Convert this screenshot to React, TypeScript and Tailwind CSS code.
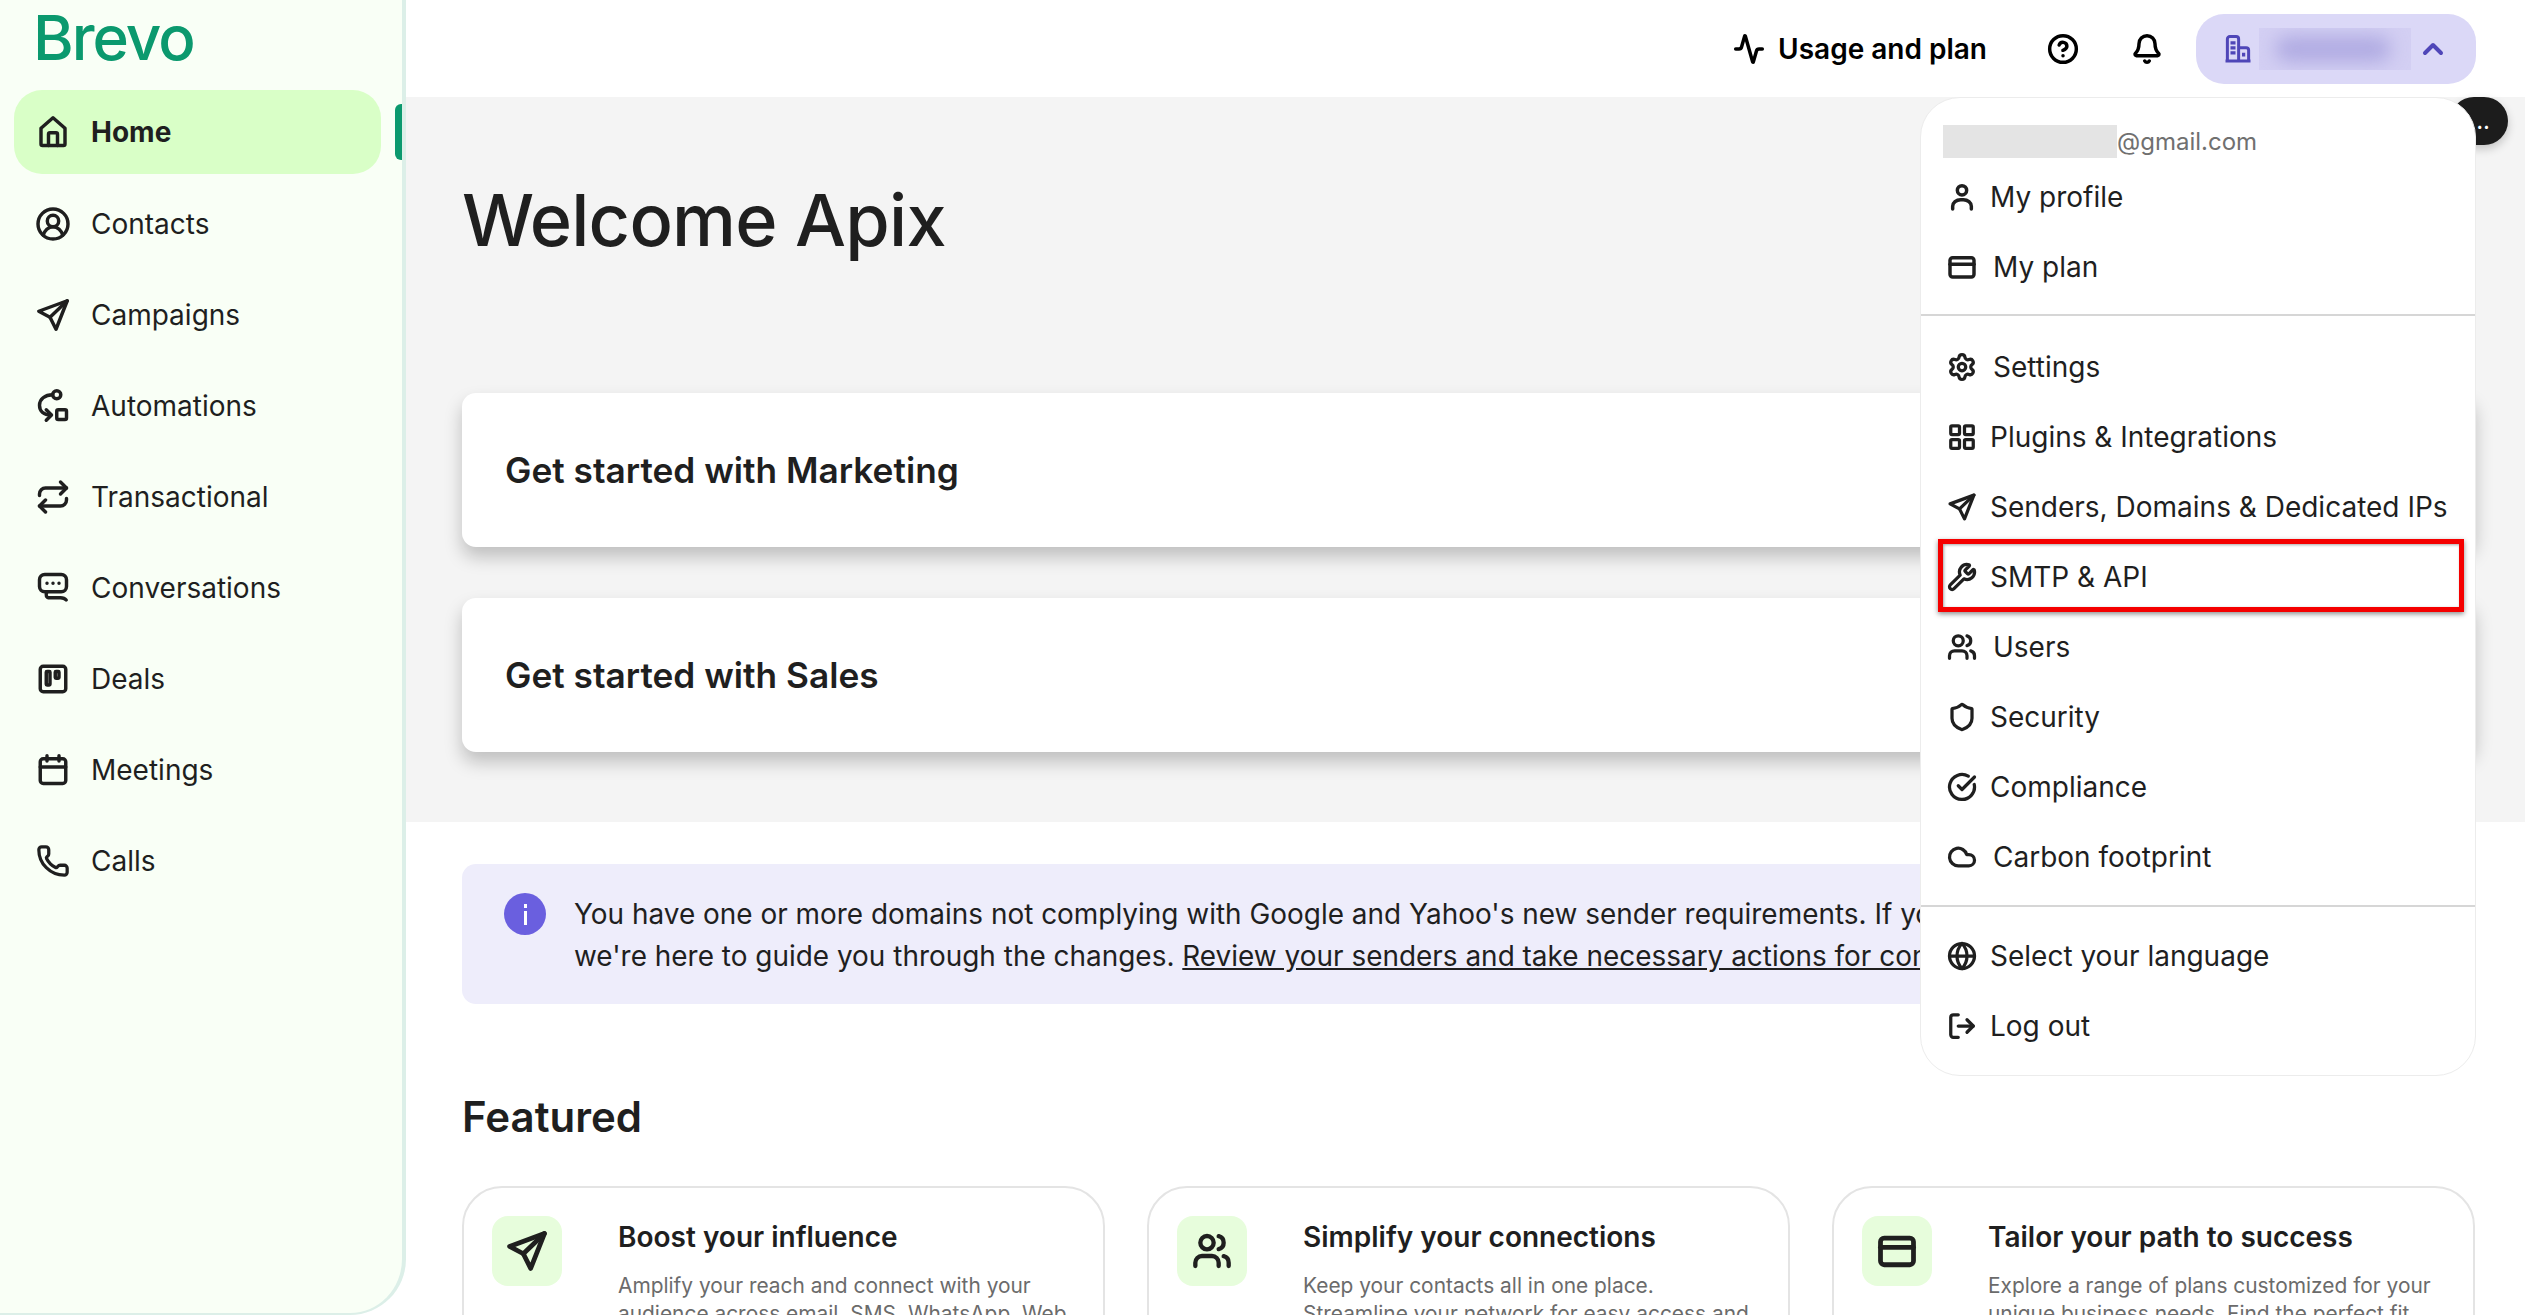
import { Activity, Bell, ChevronUp, CircleCheckBig, CircleHelp, Cloud, Globe, LayoutGrid, LogOut, Phone, Repeat, Settings, Shield, Users, Wrench } from "lucide-react";
import type { ReactNode } from "react";

function Svg({ size = 36, width = 2.3, children }: { size?: number; width?: number; children: ReactNode }) {
  return (
    <svg width={size} height={size} viewBox="0 0 24 24" fill="none" stroke="currentColor" strokeWidth={width} strokeLinecap="round" strokeLinejoin="round" className="shrink-0">
      {children}
    </svg>
  );
}

const HomeIcon = () => (
  <Svg>
    <path d="M12 2.500 4 9.500V20a1 1 0 0 0 1 1h14a1 1 0 0 0 1-1V9.500z" />
    <path d="M9 21v-7.500a1 1 0 0 1 1-1h4a1 1 0 0 1 1 1V21" />
  </Svg>
);
const ContactIcon = () => (
  <Svg>
    <circle cx="12" cy="12" r="10" />
    <circle cx="12" cy="10" r="3.800" />
    <path d="M5.500 19.500c.8-3 3.400-5.700 6.500-5.700s5.700 2.700 6.500 5.700" />
  </Svg>
);
const PlaneIcon = ({ size = 36, width = 2.3 }: { size?: number; width?: number }) => (
  <Svg size={size} width={width}>
    <path d="M21.500 2.500 2.500 9.500l7.500 4 4 8z" />
    <path d="M21.500 2.500 10 13.500" />
  </Svg>
);
const AutomationIcon = () => (
  <Svg>
    <circle cx="14.500" cy="4.500" r="2.700" />
    <rect x="14.500" y="14.500" width="6.500" height="6.500" rx="1" />
    <path d="M11.800 4.500C6.500 4.500 3 7.500 3 11.500c0 4 3 6.500 7.500 6.500" />
    <path d="m7.500 14.500 3.500 3.500-3.500 3.500" />
  </Svg>
);
const ChatIcon = () => (
  <Svg>
    <rect x="3" y="3" width="18" height="11.500" rx="3.500" />
    <path d="M8 14.500c-1.200 2.500-.5 4 2 4h7c1.600 0 3 .5 3.800 1.500" />
    <path d="M8 8.800h.01M12 8.800h.01M16 8.800h.01" />
  </Svg>
);
const DealIcon = () => (
  <Svg>
    <rect x="3.500" y="3.500" width="17" height="17" rx="2" />
    <rect x="7.500" y="7" width="2.500" height="9" rx=".5" />
    <rect x="13.500" y="7" width="2.500" height="4.500" rx=".5" />
  </Svg>
);
const CalendarIcon = () => (
  <Svg>
    <rect x="3.500" y="4.500" width="17" height="16.500" rx="2" />
    <path d="M3.500 10h17M8 2.500V6M16 2.500V6" />
  </Svg>
);
const PersonIcon = () => (
  <Svg size={32} width={2.6}>
    <circle cx="12" cy="7" r="3.500" />
    <path d="M5 21v-2a6 5 0 0 1 6-5h2a6 5 0 0 1 6 5v2" />
  </Svg>
);
const CardIcon = ({ size = 32 }: { size?: number }) => (
  <Svg size={size} width={2.6}>
    <rect x="3" y="5" width="18" height="14.500" rx="2" />
    <path d="M3 10h18" />
  </Svg>
);
const BuildingIcon = () => (
  <svg width="30" height="30" viewBox="0 0 24 24" fill="none" stroke="#4f46b8" strokeWidth="2.400" className="shrink-0">
    <path d="M3.500 21V4a2 2 0 0 1 2-2h5a2 2 0 0 1 2 2v17M12.500 11h6a2 2 0 0 1 2 2v8M2 21.500h20" />
    <path d="M6 7h4M6 11h4M6 15h4M16.500 15v3" strokeWidth="2.600" />
  </svg>
);

const nav = [
  { label: "Contacts", icon: <ContactIcon /> },
  { label: "Campaigns", icon: <PlaneIcon /> },
  { label: "Automations", icon: <AutomationIcon /> },
  { label: "Transactional", icon: <Repeat size={36} strokeWidth={2.3} className="shrink-0" /> },
  { label: "Conversations", icon: <ChatIcon /> },
  { label: "Deals", icon: <DealIcon /> },
  { label: "Meetings", icon: <CalendarIcon /> },
  { label: "Calls", icon: <Phone size={34} strokeWidth={2.3} className="shrink-0" /> },
];

const menuIconProps = { size: 30, strokeWidth: 2.6, className: "shrink-0" };

function MenuItem({ icon, label, wide = false }: { icon: ReactNode; label: string; wide?: boolean }) {
  return (
    <div className="flex h-[70px] items-center pl-[24px]">
      <div className="flex w-[34px] shrink-0 items-center justify-center text-[#1f1f1f]">{icon}</div>
      <span className={wide ? "ml-[14px] text-[28px] text-[#1f1f1f]" : "ml-[11px] text-[28px] text-[#1f1f1f]"}>{label}</span>
    </div>
  );
}

const features = [
  {
    title: "Boost your influence",
    text: "Amplify your reach and connect with your audience across email, SMS, WhatsApp, Web push and more.",
    icon: <PlaneIcon size={44} width={2.600} />,
  },
  {
    title: "Simplify your connections",
    text: "Keep your contacts all in one place. Streamline your network for easy access and better engagement.",
    icon: <Users size={40} strokeWidth={2.600} />,
  },
  {
    title: "Tailor your path to success",
    text: "Explore a range of plans customized for your unique business needs. Find the perfect fit for your team.",
    icon: <CardIcon size={44} />,
  },
];

export default function App() {
  return (
    <div className="relative flex h-[1315px] w-[2525px] overflow-hidden bg-white font-['Inter',sans-serif] text-[#1f1f1f]">
      <aside className="relative flex w-[406px] shrink-0 flex-col rounded-br-[56px] border-r-4 border-b-2 border-[#dcefe8] bg-[#f9fff6]">
        <div className="flex h-[90px] items-start pl-[33px]">
          <span className="text-[62px] leading-[76px] font-medium tracking-[-2px] text-[#0b996e]">Brevo</span>
        </div>
        <div className="mx-[14px] flex h-[84px] w-[367px] items-center gap-[20px] rounded-[28px] bg-[#d9ffc7] pl-[21px] text-[28px] font-bold">
          <HomeIcon />
          Home
        </div>
        <div className="absolute top-[104px] left-[395px] h-[56px] w-[7px] rounded-l-[6px] bg-[#0b996e]" />
        <nav className="flex flex-col pt-[4px]">
          {nav.map((item) => (
            <div key={item.label} className="flex h-[91px] items-center gap-[20px] pl-[35px] text-[28px]">
              <div className="flex w-[36px] justify-center">{item.icon}</div>
              {item.label}
            </div>
          ))}
        </nav>
      </aside>

      <div className="flex min-w-0 flex-1 flex-col">
        <header className="flex h-[97px] shrink-0 items-center justify-end pr-[49px]">
          <Activity size={32} strokeWidth={2.6} className="mr-[13px] text-black" />
          <span className="mr-[60px] text-[28px] font-semibold text-black">Usage and plan</span>
          <CircleHelp size={32} strokeWidth={2.6} className="mr-[52px] text-black" />
          <Bell size={32} strokeWidth={2.6} className="mr-[33px] text-black" />
          <div className="flex h-[70px] w-[280px] items-center rounded-[28px] bg-[#dbd8f7] pl-[27px]">
            <BuildingIcon />
            <div className="ml-[6px] h-[42px] w-[152px] overflow-hidden bg-[#d3cff3]">
              <div className="mx-[16px] mt-[8px] h-[26px] w-[116px] rounded-full bg-[#b0abe2] blur-[9px]" />
            </div>
            <ChevronUp size={32} strokeWidth={3} className="ml-[6px] text-[#4f46b8]" />
          </div>
        </header>

        <section className="flex h-[725px] shrink-0 flex-col bg-[#f4f4f4] pr-[50px] pl-[56px]">
          <h1 className="flex h-[296px] items-start pt-[77px] text-[72px] leading-[92px] font-medium tracking-[-0.8px] text-[#1f1f1f]">Welcome Apix</h1>
          <div className="flex h-[154px] items-center rounded-[14px] bg-white pt-[2px] pl-[43px] text-[35.25px] font-semibold shadow-[0_10px_18px_rgba(0,0,0,0.22)]">Get started with Marketing</div>
          <div className="mt-[51px] flex h-[154px] items-center rounded-[14px] bg-white pt-[2px] pl-[43px] text-[35.25px] font-semibold shadow-[0_10px_18px_rgba(0,0,0,0.22)]">Get started with Sales</div>
        </section>

        <main className="flex-1 pr-[50px] pl-[56px]">
          <div className="mt-[42px] flex h-[140px] overflow-hidden rounded-[14px] bg-[#eeedfb] pt-[29px] pl-[42px]">
            <div className="flex h-[42px] w-[42px] shrink-0 items-center justify-center rounded-full bg-[#6a5fdf]">
              <div className="flex flex-col items-center gap-[3px]">
                <div className="h-[4px] w-[3px] bg-white" />
                <div className="h-[14px] w-[3px] bg-white" />
              </div>
            </div>
            <p className="ml-[28px] text-[27.95px] leading-[42px] whitespace-nowrap">
              You have one or more domains not complying with Google and Yahoo's new sender requirements. If you have any questions,
              <br />
              we're here to guide you through the changes. <span className="underline">Review your senders and take necessary actions for compliance.</span>
            </p>
          </div>

          <h2 className="mt-[88px] text-[42px] leading-[50px] font-semibold">Featured</h2>

          <div className="mt-[44px] grid grid-cols-3 gap-[42px]">
            {features.map((f) => (
              <div key={f.title} className="flex h-[300px] gap-[56px] rounded-[40px] border-2 border-[#e4e4e4] pt-[28px] pl-[28px]">
                <div className="flex h-[70px] w-[70px] shrink-0 items-center justify-center rounded-[16px] bg-[#e7fddc]">{f.icon}</div>
                <div className="pr-[33px]">
                  <div className="text-[28px] leading-[42px] font-semibold">{f.title}</div>
                  <p className="mt-[14px] text-[20.9px] leading-[28px] text-[#6b6b6b]">{f.text}</p>
                </div>
              </div>
            ))}
          </div>
        </main>
      </div>

      <div className="absolute top-[97px] left-[2450px] flex h-[48px] w-[58px] items-center justify-end rounded-[24px] bg-[#1c1c1c] pr-[18px] text-[24px] leading-none text-white shadow-[0_4px_10px_rgba(0,0,0,0.2)]">
        ..
      </div>

      <div className="absolute top-[97px] left-[1920px] w-[556px] rounded-[40px] border border-[#ececec] bg-white pt-[27px] pb-[14px]">
        <div className="flex h-[33px] items-center pl-[22px]">
          <div className="h-[33px] w-[174px] bg-[#e4e4e4]" />
          <span className="text-[24px] text-[#707070]">@gmail.com</span>
        </div>
        <div className="mt-[4px]">
          <MenuItem icon={<PersonIcon />} label="My profile" />
          <MenuItem icon={<CardIcon />} label="My plan" wide />
        </div>
        <div className="mt-[12px] mb-[16px] h-[2px] bg-[#d6d6d6]" />
        <MenuItem icon={<Settings {...menuIconProps} />} label="Settings" wide />
        <MenuItem icon={<LayoutGrid {...menuIconProps} />} label="Plugins & Integrations" />
        <MenuItem icon={<PlaneIcon size={30} width={2.6} />} label="Senders, Domains & Dedicated IPs" />
        <MenuItem icon={<Wrench {...menuIconProps} />} label="SMTP & API" />
        <MenuItem icon={<Users {...menuIconProps} />} label="Users" wide />
        <MenuItem icon={<Shield {...menuIconProps} />} label="Security" />
        <MenuItem icon={<CircleCheckBig {...menuIconProps} />} label="Compliance" />
        <MenuItem icon={<Cloud {...menuIconProps} />} label="Carbon footprint" wide />
        <div className="mt-[13px] mb-[14px] h-[2px] bg-[#d6d6d6]" />
        <MenuItem icon={<Globe {...menuIconProps} />} label="Select your language" />
        <MenuItem icon={<LogOut {...menuIconProps} />} label="Log out" />
      </div>

      <div className="absolute top-[539px] left-[1938px] h-[73px] w-[526px] border-[5px] border-[#f50000] shadow-[0_2px_5px_rgba(0,0,0,0.45),inset_1px_1px_3px_rgba(0,0,0,0.35)]" />
    </div>
  );
}
